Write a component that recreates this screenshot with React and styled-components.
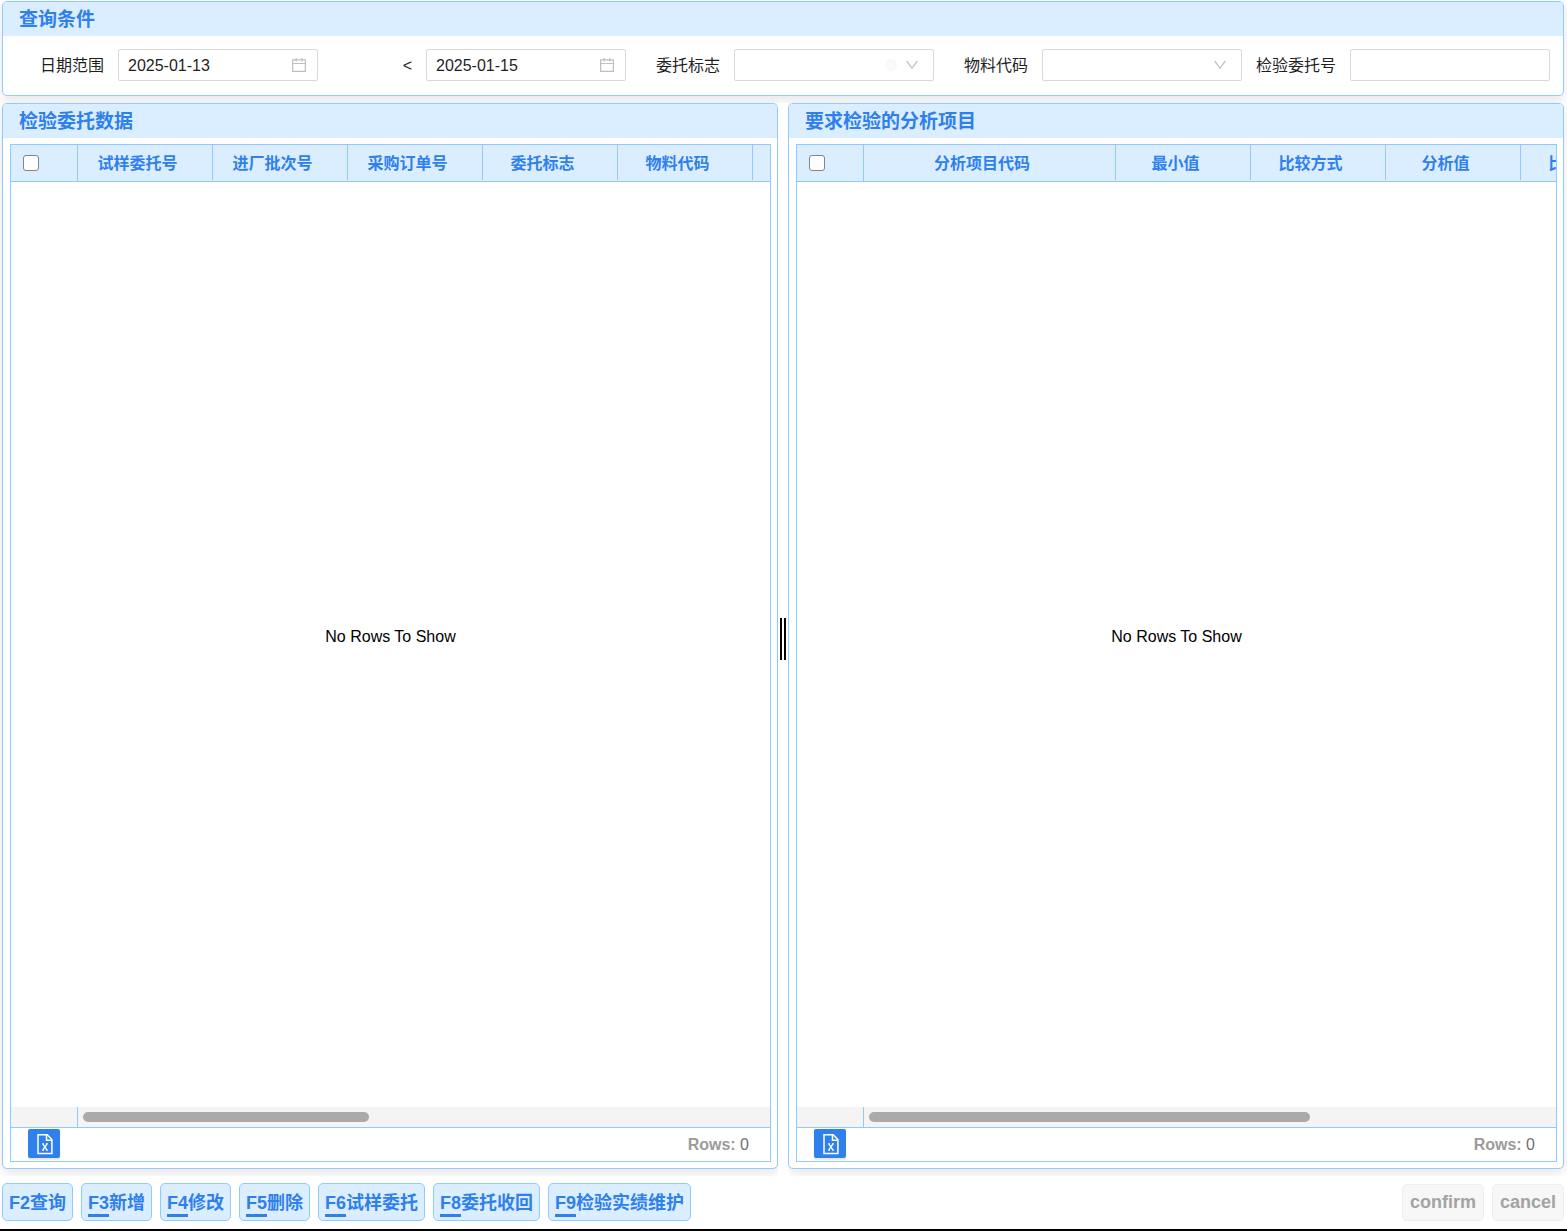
import React from "react";
import styled, { createGlobalStyle, css } from "styled-components";
import { AiOutlineCalendar, AiOutlineDown, AiFillCloseCircle } from "react-icons/ai";

const line = "#91caff";
const tint = "#dbeeff";
const accent = "#2f80ed";

const GlobalStyle = createGlobalStyle`
  *, *::before, *::after { box-sizing: border-box; }
  body {
    margin: 0;
    background: #fff;
    color: #1f1f1f;
    font: 16px/24px "Liberation Sans", "Noto Sans CJK SC", sans-serif;
  }
  button, input, select { font: inherit; color: inherit; }
`;

const Page = styled.div`
  display: flex;
  flex-direction: column;
  height: 100vh;
  border-bottom: 2px solid #000;
`;

const Workspace = styled.main`
  flex: 1;
  min-height: 0;
  display: flex;
  flex-direction: column;
  gap: 7px;
  padding: 1px 3px 0 2px;
  overflow: hidden;
`;

const Panel = styled.section`
  display: flex;
  flex-direction: column;
  min-width: 0;
  background: #fff;
  border: 1px solid ${line};
  border-radius: 5px;
  box-shadow: 0 4px 12px rgba(0, 0, 0, 0.1);
  ${(p) => p.$grow && css`flex: 1 1 0;`}
`;

const PanelTitle = styled.h2`
  margin: 0;
  padding: 2px 16px 0;
  background: ${tint};
  border-radius: 4px 4px 0 0;
  color: ${accent};
  font-size: 19px;
  line-height: 32px;
  font-weight: 700;
`;

const QueryForm = styled.form`
  display: grid;
  grid-template-columns: repeat(5, minmax(0, 1fr));
  padding: 13px 13px 14px 7px;
`;

const Field = styled.div`
  display: flex;
  align-items: center;
  gap: 14px;
`;

const FieldLabel = styled.label`
  width: 94px;
  flex: none;
  padding-top: 2px;
  text-align: right;
  white-space: nowrap;
`;

const Control = styled.div`
  flex: 1;
  min-width: 0;
  height: 32px;
  display: flex;
  align-items: center;
  border: 1px solid #d9d9d9;
  border-radius: 2px;
  background: #fff;
  color: #bfbfbf;
  padding-right: ${(p) => (p.$date ? 9 : 13)}px;
  svg { flex: none; }
`;

const bareControl = css`
  flex: 1;
  min-width: 0;
  height: 100%;
  border: 0;
  outline: 0;
  background: transparent;
  color: #1f1f1f;
  padding: 2px 0 0 9px;
`;

const TextInput = styled.input`${bareControl}`;

const Select = styled.select`
  ${bareControl}
  appearance: none;
`;

const ClearIcon = styled(AiFillCloseCircle)`
  color: #f9f9f9;
  margin-right: 6px;
`;

const Split = styled.div`
  flex: 1;
  min-height: 0;
  display: flex;
`;

const Pane = styled.div`
  flex: 1 1 0;
  min-width: 0;
  display: flex;
  padding-bottom: 7px;
`;

const Splitter = styled.div`
  position: relative;
  width: 10px;
  flex: none;
  display: flex;
  align-items: center;
  justify-content: center;
  padding-bottom: 2px;
  background: #fff;
  cursor: col-resize;
  &::before {
    content: "";
    width: 6px;
    height: 42px;
    border: solid #000;
    border-width: 0 2px;
  }
`;

const DataGrid = styled.div`
  flex: 1;
  min-height: 0;
  display: flex;
  flex-direction: column;
  margin: 6px 6px 6px 7px;
  border: 1px solid ${line};
`;

const GridBody = styled.div`
  position: relative;
  flex: 1;
  min-height: 0;
  display: flex;
  flex-direction: column;
`;

const HeaderStrip = styled.div`
  overflow: hidden;
  background: ${tint};
  border-bottom: 1px solid ${line};
`;

const HeaderTable = styled.table`
  table-layout: fixed;
  border-collapse: collapse;
  width: ${(p) => p.$width}px;
`;

const HeadCell = styled.th`
  width: ${(p) => p.$width}px;
  height: 36px;
  padding: 2px 16px 0 0;
  background: linear-gradient(${line}, ${line}) right top / 1px 35px no-repeat;
  color: ${accent};
  font-weight: 700;
  text-align: center;
  white-space: nowrap;
`;

const CheckCell = styled.th`
  width: 67px;
  height: 36px;
  padding: 0 0 0 12px;
  background: linear-gradient(${line}, ${line}) right top / 1px 100% no-repeat;
  text-align: left;
`;

const CheckBox = styled.input`
  appearance: none;
  display: block;
  width: 16px;
  height: 16px;
  margin: 0;
  border: 1px solid #7f8489;
  border-radius: 3px;
  background: #fff;
  &:checked { background: ${accent}; }
`;

const Rows = styled.div`
  flex: 1;
`;

const EmptyOverlay = styled.div`
  position: absolute;
  inset: 0;
  display: flex;
  align-items: center;
  justify-content: center;
  padding-top: 2px;
  color: #000;
  pointer-events: none;
`;

const ScrollStrip = styled.div`
  display: flex;
  height: 20px;
  background: #f4f4f4;
`;

const ScrollPinned = styled.div`
  width: 67px;
  border-right: 1px solid ${line};
`;

const ScrollTrack = styled.div`
  flex: 1;
  display: flex;
  align-items: center;
  padding: 0 5px;
`;

const ScrollThumb = styled.div`
  width: ${(p) => p.$size}%;
  height: 10px;
  border-radius: 5px;
  background: #aaa;
`;

const StatusBar = styled.div`
  display: flex;
  align-items: center;
  justify-content: space-between;
  height: 34px;
  padding: 0 21px 0 17px;
  border-top: 1px solid ${line};
  color: #707070;
`;

const RowsLabel = styled.b`
  color: #9b9b9b;
`;

const ExportButton = styled.button`
  display: flex;
  align-items: center;
  justify-content: center;
  width: 32px;
  height: 29px;
  margin: 0 0 2px;
  padding: 0;
  border: 0;
  border-radius: 2px;
  background: ${accent};
  box-shadow: 0 2px 1px rgba(0, 0, 0, 0.09);
  color: #fff;
`;

const ActionBar = styled.footer`
  display: flex;
  justify-content: space-between;
  align-items: center;
  padding: 7px 3px 8px 2px;
`;

const ButtonGroup = styled.div`
  display: flex;
  gap: 8px;
`;

const ActionButton = styled.button`
  height: 38px;
  padding: 2px 6px 0;
  border: 1px solid ${line};
  border-radius: 5px;
  background: ${tint};
  color: ${accent};
  font-size: 18px;
  line-height: 24px;
  font-weight: 700;
  white-space: nowrap;
`;

const Key = styled.span`
  display: inline-block;
  ${(p) => p.$marked && css`box-shadow: 0 3px 0 ${accent};`}
  line-height: 22px;
`;

const DialogButton = styled(ActionButton)`
  height: 37px;
  padding: 0 7px;
  border-color: #eee;
  background: #f7f7f7;
  color: #a3a3a3;
`;

function ExportIcon() {
  return (
    <svg width="18" height="22" viewBox="0 0 18 22" fill="none" stroke="currentColor" aria-hidden="true">
      <path d="M3 1.800h9.200l4.700 4.700v14H3z" strokeWidth="1.500" />
      <path d="M11.500 2v5.200H17" strokeWidth="1.500" />
      <path d="M7.800 10.800l4.200 6.400M12 10.800l-4.200 6.400" strokeWidth="1.400" />
      <path d="M7 10.800h2M11 10.800h2M7 17.200h2M11 17.200h2" strokeWidth="1" />
    </svg>
  );
}

function GridPanel({ title, columns, thumb }) {
  const total = columns.reduce((sum, c) => sum + c.width, 67);
  return (
    <Panel $grow>
      <PanelTitle>{title}</PanelTitle>
      <DataGrid>
        <GridBody>
          <HeaderStrip>
            <HeaderTable $width={total}>
              <thead>
                <tr>
                  <CheckCell scope="col">
                    <CheckBox type="checkbox" aria-label={title} />
                  </CheckCell>
                  {columns.map((c, i) => (
                    <HeadCell key={i} scope="col" $width={c.width}>
                      {c.name}
                    </HeadCell>
                  ))}
                </tr>
              </thead>
            </HeaderTable>
          </HeaderStrip>
          <Rows />
          <ScrollStrip>
            <ScrollPinned />
            <ScrollTrack>
              <ScrollThumb $size={thumb} />
            </ScrollTrack>
          </ScrollStrip>
          <EmptyOverlay>No Rows To Show</EmptyOverlay>
        </GridBody>
        <StatusBar>
          <ExportButton type="button" aria-label="Excel">
            <ExportIcon />
          </ExportButton>
          <span>
            <RowsLabel>Rows:</RowsLabel> 0
          </span>
        </StatusBar>
      </DataGrid>
    </Panel>
  );
}

const requestColumns = [
  { name: "试样委托号", width: 135 },
  { name: "进厂批次号", width: 135 },
  { name: "采购订单号", width: 135 },
  { name: "委托标志", width: 135 },
  { name: "物料代码", width: 135 },
];

const itemColumns = [
  { name: "分析项目代码", width: 252 },
  { name: "最小值", width: 135 },
  { name: "比较方式", width: 135 },
  { name: "分析值", width: 135 },
  { name: "比较方式", width: 135 },
];

const actions = [
  { code: "F2", name: "查询" },
  { code: "F3", name: "新增", marked: true },
  { code: "F4", name: "修改", marked: true },
  { code: "F5", name: "删除", marked: true },
  { code: "F6", name: "试样委托", marked: true },
  { code: "F8", name: "委托收回", marked: true },
  { code: "F9", name: "检验实绩维护", marked: true },
];

export default function App() {
  return (
    <Page>
      <GlobalStyle />
      <Workspace>
        <Panel>
          <PanelTitle>查询条件</PanelTitle>
          <QueryForm>
            <Field>
              <FieldLabel htmlFor="date-from">日期范围</FieldLabel>
              <Control $date>
                <TextInput id="date-from" defaultValue="2025-01-13" />
                <AiOutlineCalendar size={18} />
              </Control>
            </Field>
            <Field>
              <FieldLabel htmlFor="date-to">&lt;</FieldLabel>
              <Control $date>
                <TextInput id="date-to" defaultValue="2025-01-15" />
                <AiOutlineCalendar size={18} />
              </Control>
            </Field>
            <Field>
              <FieldLabel htmlFor="flag">委托标志</FieldLabel>
              <Control>
                <Select id="flag" />
                <ClearIcon size={14} />
                <AiOutlineDown size={16} />
              </Control>
            </Field>
            <Field>
              <FieldLabel htmlFor="material">物料代码</FieldLabel>
              <Control>
                <Select id="material" />
                <AiOutlineDown size={16} />
              </Control>
            </Field>
            <Field>
              <FieldLabel htmlFor="request-no">检验委托号</FieldLabel>
              <Control>
                <TextInput id="request-no" />
              </Control>
            </Field>
          </QueryForm>
        </Panel>
        <Split>
          <Pane>
            <GridPanel title="检验委托数据" columns={requestColumns} thumb={42} />
          </Pane>
          <Splitter />
          <Pane>
            <GridPanel title="要求检验的分析项目" columns={itemColumns} thumb={64.7} />
          </Pane>
        </Split>
      </Workspace>
      <ActionBar>
        <ButtonGroup>
          {actions.map((a) => (
            <ActionButton key={a.code} type="button">
              <Key $marked={a.marked}>{a.code}</Key>
              {a.name}
            </ActionButton>
          ))}
        </ButtonGroup>
        <ButtonGroup>
          <DialogButton type="button" disabled>confirm</DialogButton>
          <DialogButton type="button" disabled>cancel</DialogButton>
        </ButtonGroup>
      </ActionBar>
    </Page>
  );
}
